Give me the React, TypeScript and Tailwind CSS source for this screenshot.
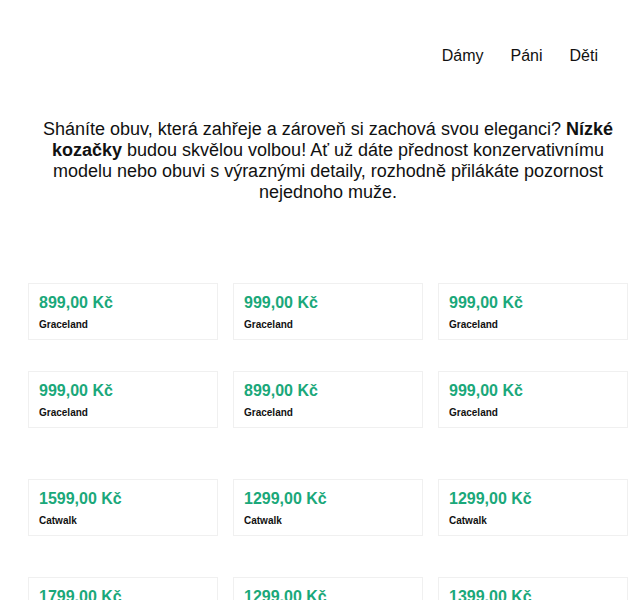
const sections = [
  {
    gap: 'gap-y-[31px]',
    items: [
      { price: '899,00 Kč', brand: 'Graceland' },
      { price: '999,00 Kč', brand: 'Graceland' },
      { price: '999,00 Kč', brand: 'Graceland' },
      { price: '999,00 Kč', brand: 'Graceland' },
      { price: '899,00 Kč', brand: 'Graceland' },
      { price: '999,00 Kč', brand: 'Graceland' },
    ],
  },
  {
    gap: 'gap-y-[41px]',
    items: [
      { price: '1599,00 Kč', brand: 'Catwalk' },
      { price: '1299,00 Kč', brand: 'Catwalk' },
      { price: '1299,00 Kč', brand: 'Catwalk' },
      { price: '1799,00 Kč', brand: 'Catwalk' },
      { price: '1299,00 Kč', brand: 'Catwalk' },
      { price: '1399,00 Kč', brand: 'Catwalk' },
    ],
  },
];

function ProductCard({ price, brand }: { price: string; brand: string }) {
  return (
    <div className="border border-[#f0f0f0] bg-white px-[10px] pt-[7px] pb-[7px]">
      <div className="text-[16px] font-bold leading-[24px] text-[#1aa87a]">{price}</div>
      <div className="mt-[2px] text-[10px] font-bold leading-[15px] text-[#111]">{brand}</div>
    </div>
  );
}

export default function App() {
  return (
    <div className="min-h-[600px] bg-white font-['Liberation_Sans',Arial,sans-serif] text-[#111]">
      <nav className="flex justify-end gap-[27px] pt-[44px] pr-[42px] text-[16px] leading-[24px]">
        <a href="#">Dámy</a>
        <a href="#">Páni</a>
        <a href="#">Děti</a>
      </nav>

      <p className="ml-[28px] mt-[51px] w-[600px] px-[10px] text-center text-[18px] leading-[21px]">
        Sháníte obuv, která zahřeje a zároveň si zachová svou eleganci? <b>Nízké kozačky</b> budou
        skvělou volbou! Ať už dáte přednost konzervativnímu modelu nebo obuvi s výraznými detaily,
        rozhodně přilákáte pozornost nejednoho muže.
      </p>

      <div className="ml-[28px] mt-[80px] flex w-[600px] flex-col gap-[51px]">
        {sections.map((s, i) => (
          <div key={i} className={`grid grid-cols-3 gap-x-[15px] ${s.gap}`}>
            {s.items.map((p, j) => (
              <ProductCard key={j} price={p.price} brand={p.brand} />
            ))}
          </div>
        ))}
      </div>
    </div>
  );
}
